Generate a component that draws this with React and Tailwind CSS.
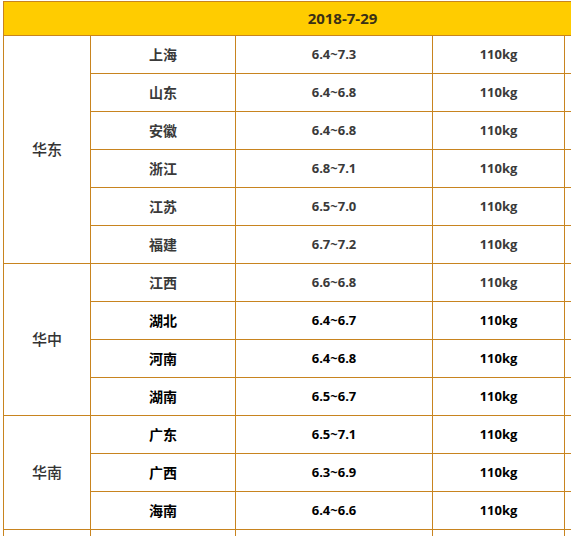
const groups = [
  {
    name: '华东',
    rows: [
      ['上海', '6.4~7.3', '110kg', false],
      ['山东', '6.4~6.8', '110kg', false],
      ['安徽', '6.4~6.8', '110kg', false],
      ['浙江', '6.8~7.1', '110kg', false],
      ['江苏', '6.5~7.0', '110kg', false],
      ['福建', '6.7~7.2', '110kg', false],
    ],
  },
  {
    name: '华中',
    rows: [
      ['江西', '6.6~6.8', '110kg', false],
      ['湖北', '6.4~6.7', '110kg', true],
      ['河南', '6.4~6.8', '110kg', true],
      ['湖南', '6.5~6.7', '110kg', true],
    ],
  },
  {
    name: '华南',
    rows: [
      ['广东', '6.5~7.1', '110kg', true],
      ['广西', '6.3~6.9', '110kg', true],
      ['海南', '6.4~6.6', '110kg', true],
    ],
  },
];

const cell = 'border border-solid border-[#c8841f] text-center align-middle p-0';

export default function App() {
  return (
    <div
      className="w-[571px] h-[536px] overflow-hidden bg-white"
      style={{ fontFamily: '"Open Sans", "Noto Sans CJK SC", sans-serif' }}
    >
      <table className="ml-[3px] mt-[1px] border-collapse table-fixed w-[678px] text-[13px]">
        <colgroup>
          <col className="w-[87px]" />
          <col className="w-[145px]" />
          <col className="w-[197px]" />
          <col className="w-[132px]" />
          <col className="w-[117px]" />
        </colgroup>
        <tbody>
          <tr className="h-[34px] bg-[#ffcc00]">
            <td colSpan={5} className={`${cell} text-[15px] font-bold text-[#3a3016]`}>
              2018-7-29
            </td>
          </tr>
          {groups.map(g =>
            g.rows.map((r, i) => {
              const tone = r[3] ? 'text-black' : 'text-[#3a3a3a]';
              return (
                <tr key={g.name + r[0]} className="h-[38px]">
                  {i === 0 && (
                    <td rowSpan={g.rows.length} className={`${cell} text-[#333] text-[15px] font-medium`}>
                      {g.name}
                    </td>
                  )}
                  <td className={`${cell} ${tone} font-bold text-[14px]`}>{r[0]}</td>
                  <td className={`${cell} ${tone} font-bold`}>{r[1]}</td>
                  <td className={`${cell} ${tone} font-bold`}>{r[2]}</td>
                  <td className={cell}></td>
                </tr>
              );
            })
          )}
          <tr className="h-[38px]">
            <td className={cell}></td>
            <td className={cell}></td>
            <td className={cell}></td>
            <td className={cell}></td>
            <td className={cell}></td>
          </tr>
        </tbody>
      </table>
    </div>
  );
}
